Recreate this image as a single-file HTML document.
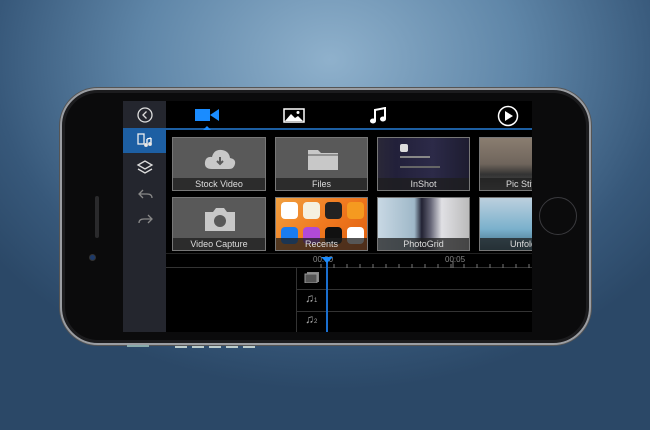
<!DOCTYPE html>
<html><head><style>
*{margin:0;padding:0;box-sizing:border-box}
body{width:650px;height:430px;overflow:hidden;position:relative;font-family:"Liberation Sans",sans-serif;
background:radial-gradient(ellipse 420px 330px at 330px 60px,#8fb1cc 0%,#5f86a8 45%,#37587a 80%,#2b4867 100%);}
.abs{position:absolute}
.phone{left:60px;top:88px;width:531px;height:257px;border-radius:38px;background:#0b0b0c;border:2px solid #9a9da2;box-shadow:0 0 0 1px #555,inset 0 0 0 3px #1c1c1e}
.screen{left:123px;top:101px;width:409px;height:231px;background:#000;overflow:hidden}
.side{left:0;top:0;width:43px;height:231px;background:#24262e}
.tile{position:absolute;background:#595959;border:1px solid #777}
.lbl{position:absolute;left:0;right:0;bottom:0;height:12px;background:rgba(30,30,30,.75);color:#ddd;font-size:9px;text-align:center;line-height:12px;overflow:hidden;white-space:nowrap}
.track{position:absolute;left:173px;right:0;height:1px;background:#333}
</style></head><body>
<div class="abs phone"></div>
<div class="abs" style="left:95px;top:196px;width:4px;height:42px;background:#2a2a2c;border-radius:2px"></div>
<div class="abs" style="left:89px;top:254px;width:7px;height:7px;background:#1d3a6a;border-radius:50%;border:1px solid #333"></div>
<div class="abs" style="left:539px;top:197px;width:38px;height:38px;border-radius:50%;border:1.5px solid #3a3a3e"></div>
<div class="abs screen">
 <div class="abs side"></div>
 <div class="abs" style="left:0;top:27px;width:43px;height:25px;background:#1d5fa3"></div>
 <svg class="abs" style="left:0;top:0" width="43" height="130" fill="none" stroke="#ddd" stroke-width="1.3">
  <circle cx="22" cy="14" r="7"/><path d="M23.5 10.5 L20 14 L23.5 17.5"/>
  <rect x="15" y="33" width="6" height="10" stroke="#eee"/><path d="M24 38v6M28 37v6M24 38l4-1" stroke="#fff"/><circle cx="23" cy="44" r="1.3" fill="#fff"/><circle cx="27" cy="43" r="1.3" fill="#fff"/>
  <path d="M15 64 L22 60 L29 64 L22 68Z M15 68 L22 72 L29 68"/>
  <path d="M20 89 L16 93 L20 97 M16 93 H24 Q29 93 29 97" stroke="#888"/>
  <path d="M25 114 L29 118 L25 122 M29 118 H21 Q16 118 16 122" stroke="#888"/>
 </svg>
 <div class="abs" style="left:43px;top:27px;width:366px;height:2px;background:#1d5fa3"></div>
 <svg class="abs" style="left:72px;top:5px" width="26" height="24"><rect x="0" y="3" width="15" height="12" fill="#1a8cff"/><path d="M15 9 L24 3 V15Z" fill="#1a8cff"/><path d="M8 24 L12 20 L16 24Z" fill="#1a8cff"/></svg>
 <svg class="abs" style="left:160px;top:7px" width="22" height="16"><rect x="1" y="1" width="20" height="13" fill="none" stroke="#fff" stroke-width="1.5"/><path d="M2 13 L8 6 L12 10 L15 8 L20 13Z" fill="#fff"/><circle cx="15" cy="4.5" r="1.5" fill="#fff"/></svg>
 <svg class="abs" style="left:246px;top:6px" width="18" height="18"><path d="M6 14V3L16 1V12" stroke="#fff" stroke-width="2" fill="none"/><ellipse cx="4" cy="14" rx="3" ry="2.5" fill="#fff"/><ellipse cx="14" cy="12" rx="3" ry="2.5" fill="#fff"/></svg>
 <svg class="abs" style="left:374px;top:4px" width="22" height="22"><circle cx="11" cy="11" r="9.5" stroke="#fff" stroke-width="1.5" fill="none"/><path d="M8 6 L16 11 L8 16Z" fill="#fff"/></svg>

 <div class="tile" style="left:49px;top:36px;width:94px;height:54px">
  <svg class="abs" style="left:31px;top:10px" width="32" height="22"><path d="M8 21 Q0 21 1 14 Q2 8 8 9 Q10 1 18 2 Q25 3 26 10 Q32 11 31 16 Q30 21 25 21Z" fill="#c8c8c8"/><path d="M16 9v7M13 13l3 3 3-3" stroke="#595959" stroke-width="2" fill="none"/></svg>
  <div class="lbl">Stock Video</div></div>
 <div class="tile" style="left:152px;top:36px;width:93px;height:54px">
  <svg class="abs" style="left:32px;top:10px" width="30" height="22"><path d="M0 2h10l3 3h17v17H0Z" fill="#c8c8c8"/><path d="M0 7h30" stroke="#595959"/></svg>
  <div class="lbl">Files</div></div>
 <div class="tile" style="left:254px;top:36px;width:93px;height:54px;background:linear-gradient(90deg,#2a2838 0%,#22203a 20%,#2c2a48 60%,#1d1c30 100%)">
  <div class="abs" style="left:22px;top:6px;width:8px;height:8px;background:#ddd;border-radius:2px"></div>
  <div class="abs" style="left:22px;top:18px;width:30px;height:2px;background:#888"></div>
  <div class="abs" style="left:22px;top:28px;width:40px;height:2px;background:#666"></div>
  <div class="lbl">InShot</div></div>
 <div class="tile" style="left:356px;top:36px;width:60px;height:54px;background:linear-gradient(180deg,#8a7d70,#6f655c 50%,#333 70%,#555)">
  <div class="lbl" style="text-align:left;padding-left:26px">Pic Stitch</div></div>

 <div class="tile" style="left:49px;top:96px;width:94px;height:54px">
  <svg class="abs" style="left:32px;top:9px" width="30" height="24"><path d="M0 5h8l3-4h8l3 4h8v19H0Z" fill="#c8c8c8"/><circle cx="15" cy="14" r="6" fill="#595959"/></svg>
  <div class="lbl">Video Capture</div></div>
 <div class="tile" style="left:152px;top:96px;width:93px;height:54px;background:linear-gradient(135deg,#f0a040,#f07a20 50%,#e06010)">
  <div class="abs" style="left:5px;top:4px;width:17px;height:17px;background:#fff;border-radius:4px"></div>
  <div class="abs" style="left:27px;top:4px;width:17px;height:17px;background:#f5f0e0;border-radius:4px"></div>
  <div class="abs" style="left:49px;top:4px;width:17px;height:17px;background:#222;border-radius:4px"></div>
  <div class="abs" style="left:71px;top:4px;width:17px;height:17px;background:#f59a20;border-radius:4px"></div>
  <div class="abs" style="left:5px;top:29px;width:17px;height:17px;background:#1a7cf0;border-radius:4px"></div>
  <div class="abs" style="left:27px;top:29px;width:17px;height:17px;background:#b04ad8;border-radius:4px"></div>
  <div class="abs" style="left:49px;top:29px;width:17px;height:17px;background:#111;border-radius:4px"></div>
  <div class="abs" style="left:71px;top:29px;width:17px;height:17px;background:#fff;border-radius:4px"></div>
  <div class="lbl">Recents</div></div>
 <div class="tile" style="left:254px;top:96px;width:93px;height:54px;background:linear-gradient(90deg,#c8d8e4 0%,#9fb8c8 40%,#223 48%,#667 58%,#e0e0e4 70%,#bbb 100%)">
  <div class="lbl">PhotoGrid</div></div>
 <div class="tile" style="left:356px;top:96px;width:60px;height:54px;background:linear-gradient(180deg,#bcd0de,#7ab0cc 60%,#3d6a80)">
  <div class="lbl" style="text-align:left;padding-left:30px">Unfold</div></div>

 <div class="abs" style="left:43px;top:152px;width:366px;height:1px;background:#222"></div>
 <div class="abs" style="left:43px;top:166px;width:366px;height:1px;background:#333"></div>
 <div class="abs" style="left:173px;top:166px;width:1px;height:65px;background:#333"></div>
 <div class="track" style="top:188px"></div><div class="track" style="top:210px"></div>
 <div class="abs" style="left:190px;top:154px;font-size:8px;color:#888">00:00</div>
 <div class="abs" style="left:322px;top:154px;font-size:8px;color:#888">00:05</div>
 <svg class="abs" style="left:190px;top:160px" width="219" height="7"><path d="M8 3v4M21 3v4M34 3v4M47 3v4M60 3v4M73 3v4M86 3v4M99 3v4M112 3v4M125 3v4M138 3v4M151 3v4M164 3v4M177 3v4M190 3v4M203 3v4M216 3v4M140 0v7" stroke="#777"/></svg>
 <div class="abs" style="left:203px;top:158px;width:2px;height:73px;background:#1a6fd0"></div>
 <svg class="abs" style="left:198px;top:156px" width="12" height="7"><path d="M0 0h12L6 6Z" fill="#1a8cff"/></svg>
 <svg class="abs" style="left:181px;top:170px" width="16" height="12"><rect x="3" y="1" width="12" height="10" fill="#888"/><rect x="1" y="3" width="12" height="9" fill="#555" stroke="#999"/></svg>
 <div class="abs" style="left:182px;top:190px;font-size:12px;color:#aaa">♫<span style="font-size:6px">1</span></div>
 <div class="abs" style="left:182px;top:211px;font-size:12px;color:#aaa">♫<span style="font-size:6px">2</span></div>
</div>
<div class="abs" style="left:127px;top:345px;width:22px;height:2px;background:#8aa"></div>
<div class="abs" style="left:175px;top:346px;width:85px;height:2px;background:repeating-linear-gradient(90deg,#bcc 0 12px,transparent 12px 17px)"></div>
</body></html>
